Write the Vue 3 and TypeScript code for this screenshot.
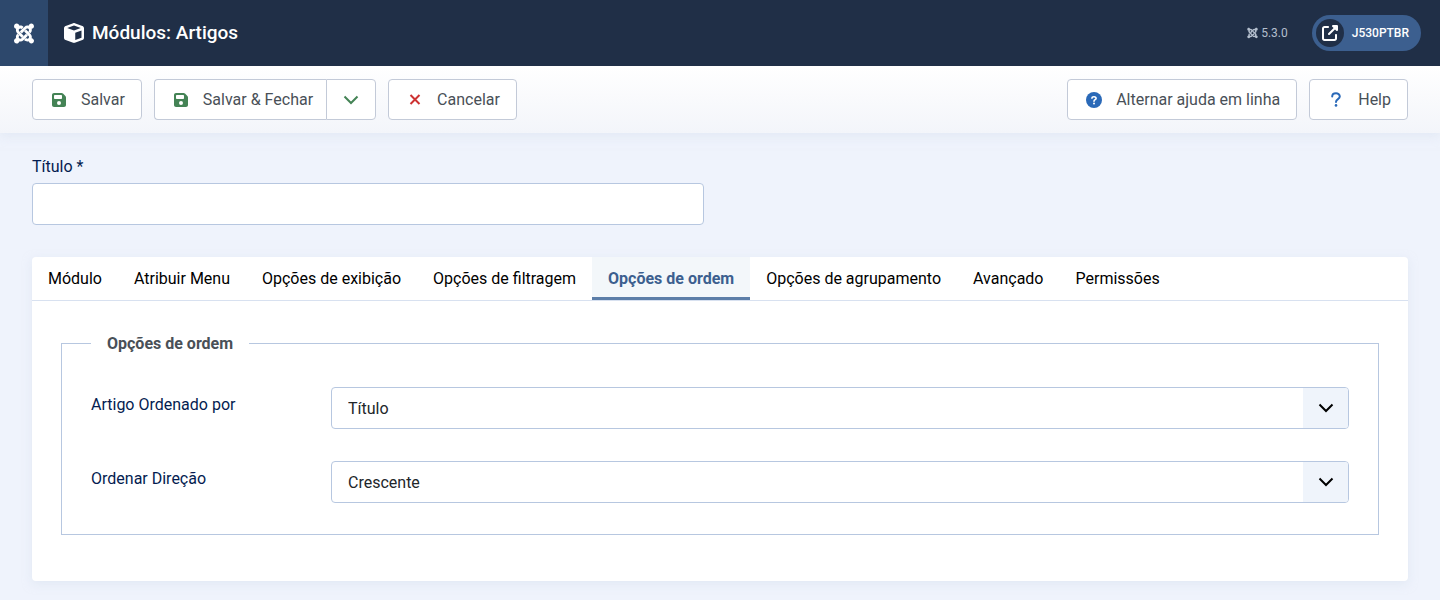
<script setup lang="ts">
import { ref } from 'vue'

interface SelectField {
  id: string
  label: string
  value: string
  options: string[]
}

const joomlaPath =
  'M.6 92.1C.6 58.8 27.4 32 60.4 32c30 0 54.5 21.9 59.2 50.2 32.6-7.6 67.1.6 96.5 30l-44.3 44.3c-20.5-20.5-42.6-16.3-55.4-3.5-14.3 14.3-14.3 37.9 0 52.2l99.5 99.5-44 44.3c-87.7-87.2-49.7-49.7-99.8-99.7-26.8-26.5-35-64.8-24.8-98.9C20.4 144.6.6 120.7.6 92.1zm129.5 116.4l44.3 44.3c10-10 89.7-89.7 99.7-99.8 14.3-14.3 37.6-14.3 51.9 0 12.8 12.8 17 35-3.5 55.4l44 44.3c31.2-31.2 38.5-67.6 28.9-101.2 29.2-4.1 51.9-29.2 51.9-59.5 0-33.2-26.8-60.1-59.8-60.1-30.3 0-55.4 22.5-59.5 51.6-33.8-9.9-71.7-1.5-98.3 25.1-18.3 19.1-71.1 71.5-99.6 99.9zm266.3 152.2c8.2-32.7-.9-68.5-26.3-93.9-11.8-12.2 5 4.7-99.5-99.7l-44.3 44.3 99.7 99.7c14.3 14.3 14.3 37.6 0 51.9-12.8 12.8-35 17-55.4-3.5l-44 44.3c27.6 30.2 68 38.8 102.7 28 5.5 27.4 29.7 48.1 58.9 48.1 33 0 59.8-26.8 59.8-60.1 0-30.2-22.5-55-51.6-59.1zm-84.3-53.1l-44-44.3c-87 86.4-50.4 50.4-99.7 99.8-14.3 14.3-37.6 14.3-51.9 0-13.1-13.4-16.9-35.3 3.2-55.4l-44-44.3c-30.2 30.2-38 65.2-29.5 98.3-26.7 6-46.2 29.9-46.2 58.2C0 453.2 26.8 480 59.8 480c28.6 0 52.5-19.8 58.6-46.7 32.7 8.2 68.5-.6 94.2-26 32.1-32.2 12.2-12.2 99.5-99.7z'
const cubePath =
  'M234.5 5.7c13.9-5 29.1-5 43.1 0l192 68.6C495 83.4 512 107.5 512 134.6V377.4c0 27-17 51.2-42.5 60.3l-192 68.6c-13.9 5-29.1 5-43.1 0l-192-68.6C17 428.6 0 404.5 0 377.4V134.6c0-27 17-51.2 42.5-60.3l192-68.6zM256 66L82.3 128 256 190l173.7-62L256 66zm32 368.6l160-57.1v-188L288 246.6v188z'
const savePath =
  'M64 32C28.7 32 0 60.7 0 96V416c0 35.3 28.7 64 64 64H384c35.3 0 64-28.7 64-64V173.3c0-17-6.7-33.3-18.7-45.3L352 50.7C340 38.7 323.7 32 306.7 32H64zm0 96c0-17.7 14.3-32 32-32H288c17.7 0 32 14.3 32 32v64c0 17.7-14.3 32-32 32H96c-17.7 0-32-14.3-32-32V128zM224 288a64 64 0 1 1 0 128 64 64 0 1 1 0-128z'
const externalPath =
  'M352 0c-12.9 0-24.6 7.8-29.6 19.8s-2.2 25.7 6.9 34.9L370.7 96 201.4 265.4c-12.5 12.5-12.5 32.8 0 45.3s32.8 12.5 45.3 0L416 141.3l41.4 41.4c9.2 9.2 22.9 11.9 34.9 6.9s19.8-16.6 19.8-29.6V32c0-17.7-14.3-32-32-32H352zM80 32C35.8 32 0 67.8 0 112V432c0 44.2 35.8 80 80 80H400c44.2 0 80-35.8 80-80V320c0-17.7-14.3-32-32-32s-32 14.3-32 32V432c0 8.8-7.2 16-16 16H80c-8.8 0-16-7.2-16-16V112c0-8.8 7.2-16 16-16H192c17.7 0 32-14.3 32-32s-14.3-32-32-32H80z'

const title = ref('')
const tabs: string[] = [
  'Módulo',
  'Atribuir Menu',
  'Opções de exibição',
  'Opções de filtragem',
  'Opções de ordem',
  'Opções de agrupamento',
  'Avançado',
  'Permissões',
]
const activeTab = ref('Opções de ordem')
const fields = ref<SelectField[]>([
  { id: 'ordering', label: 'Artigo Ordenado por', value: 'Título', options: ['Título', 'Data', 'Autor'] },
  { id: 'direction', label: 'Ordenar Direção', value: 'Crescente', options: ['Crescente', 'Decrescente'] },
])
</script>

<template>
  <div class="page">
    <header class="header">
      <a class="logo" href="#" aria-label="Joomla">
        <svg width="20" height="23" viewBox="0 0 448 512" fill="currentColor"><path :d="joomlaPath" /></svg>
      </a>
      <h1 class="title">
        <svg width="20" height="20" viewBox="0 0 512 512" fill="currentColor"><path :d="cubePath" /></svg>
        <span>Módulos: Artigos</span>
      </h1>
      <div class="version">
        <svg width="11" height="12" viewBox="0 0 448 512" fill="currentColor"><path :d="joomlaPath" /></svg>
        <span>5.3.0</span>
      </div>
      <a class="site" href="#">
        <span class="site-icon">
          <svg width="16" height="16" viewBox="0 0 512 512" fill="currentColor"><path :d="externalPath" /></svg>
        </span>
        <span>J530PTBR</span>
      </a>
    </header>

    <div class="toolbar">
      <button class="btn" type="button">
        <span class="icon green"><svg width="14" height="16" viewBox="0 0 448 512" fill="currentColor"><path :d="savePath" /></svg></span>
        Salvar
      </button>
      <div class="group">
        <button class="btn" type="button">
          <span class="icon green"><svg width="14" height="16" viewBox="0 0 448 512" fill="currentColor"><path :d="savePath" /></svg></span>
          Salvar &amp; Fechar
        </button>
        <button class="btn toggle green" type="button" aria-label="Mais opções">
          <svg width="16" height="10" viewBox="0 0 16 10" fill="none" stroke="currentColor" stroke-width="2"><path d="M1.5 1.5L8 8l6.5-6.5" /></svg>
        </button>
      </div>
      <button class="btn" type="button">
        <span class="icon red"><svg width="12" height="12" viewBox="0 0 12 12" fill="none" stroke="currentColor" stroke-width="2"><path d="M1.5 1l9 9M10.5 1l-9 9" /></svg></span>
        Cancelar
      </button>
      <button class="btn end" type="button">
        <span class="icon blue">
          <svg width="16" height="16" viewBox="0 0 16 16" fill="none">
            <circle cx="8" cy="8" r="8" fill="currentColor" />
            <path d="M5.9 6.1C6 4.2 10.1 4.3 10.1 6.4 10.1 7.7 8 7.7 8 9.2" stroke="#fff" stroke-width="1.6" stroke-linecap="round" />
            <circle cx="8" cy="11.5" r="1" fill="#fff" />
          </svg>
        </span>
        Alternar ajuda em linha
      </button>
      <button class="btn" type="button">
        <span class="icon blue">
          <svg width="10" height="16" viewBox="0 0 10 16" fill="none">
            <path d="M1.2 4.6C1.2.3 8.8.3 8.8 4.5 8.8 7.2 5 7 5 10" stroke="currentColor" stroke-width="2" stroke-linecap="round" />
            <circle cx="5" cy="13.4" r="1.3" fill="currentColor" />
          </svg>
        </span>
        Help
      </button>
    </div>

    <main class="content">
      <div class="title-field">
        <label for="title">Título *</label>
        <input id="title" v-model="title" type="text" required />
      </div>

      <section class="card">
        <div class="tabs" role="tablist">
          <button
            v-for="tab in tabs"
            :key="tab"
            type="button"
            role="tab"
            class="tab"
            :class="{ active: tab === activeTab }"
            :aria-selected="tab === activeTab"
            @click="activeTab = tab"
          >{{ tab }}</button>
        </div>
        <div class="panel">
          <fieldset>
            <legend>Opções de ordem</legend>
            <div v-for="field in fields" :key="field.id" class="row">
              <label :for="field.id">{{ field.label }}</label>
              <div class="select">
                <select :id="field.id" v-model="field.value">
                  <option v-for="option in field.options" :key="option">{{ option }}</option>
                </select>
                <span class="caret">
                  <svg width="16" height="10" viewBox="0 0 16 10" fill="none" stroke="currentColor" stroke-width="2"><path d="M1.5 1.5L8 8l6.5-6.5" /></svg>
                </span>
              </div>
            </div>
          </fieldset>
        </div>
      </section>
    </main>
  </div>
</template>

<style>
body {
  background: #eff3fc;
}
</style>

<style scoped>
.page {
  font: 16px/24px Roboto, "Liberation Sans", sans-serif;
  color: #22262a;
}
.page *,
.page *::before {
  box-sizing: border-box;
}
svg {
  display: block;
  flex: none;
}
button,
input,
select {
  font: inherit;
}
.header {
  position: relative;
  z-index: 1;
  display: flex;
  align-items: center;
  min-height: 66px;
  padding-right: 19px;
  background: #202f47;
  color: #fff;
}
.logo {
  display: flex;
  align-items: center;
  justify-content: center;
  align-self: stretch;
  width: 48px;
  background: #2d486c;
  color: #fff;
}
.title {
  display: flex;
  align-items: center;
  gap: 8px;
  flex: 1;
  margin: 0 0 0 16px;
  font-size: 19px;
  font-weight: 500;
}
.version {
  display: flex;
  align-items: center;
  gap: 3px;
  margin-right: 24px;
  font-size: 12px;
  color: #b4bfce;
}
.site {
  display: flex;
  align-items: center;
  gap: 8px;
  height: 36px;
  padding: 0 12px 0 4px;
  border-radius: 18px;
  background: #3c5f8f;
  color: #fff;
  font-size: 12px;
  font-weight: 500;
  text-decoration: none;
}
.site-icon {
  display: flex;
  align-items: center;
  justify-content: center;
  width: 28px;
  height: 28px;
  border-radius: 50%;
  background: #202f47;
}
.toolbar {
  display: flex;
  gap: 12px;
  padding: 13px 32px;
  background: linear-gradient(#fff, #f3f5fa);
  box-shadow: 0 3px 10px #d5dfee80;
}
.btn {
  display: flex;
  align-items: center;
  gap: 12px;
  height: 41px;
  padding: 0 16px;
  border: 1px solid #c3cad8;
  border-radius: 4px;
  background: #fff;
  color: #495057;
}
.icon {
  display: flex;
  justify-content: center;
  width: 20px;
}
.green,
.btn.green {
  color: #448355;
}
.red {
  color: #cd3232;
}
.blue {
  color: #2a69b8;
}
.group {
  display: flex;
}
.group .btn:first-child {
  padding-right: 13px;
  border-right: 0;
  border-radius: 4px 0 0 4px;
}
.btn.toggle {
  justify-content: center;
  width: 50px;
  padding: 0;
  border-radius: 0 4px 4px 0;
}
.end {
  margin-left: auto;
}
.content {
  padding: 22px 32px 20px;
}
.title-field {
  width: calc(50% - 16px);
  margin-bottom: 32px;
}
label {
  color: #041c50;
}
.title-field label {
  display: block;
  margin-bottom: 4px;
}
.title-field input {
  display: block;
  width: 100%;
  height: 42px;
  padding: 0 16px;
  border: 1px solid #b7c7e0;
  border-radius: 4px;
  background: #fff;
}
.card {
  border-radius: 4px;
  background: #fff;
  box-shadow: 0 3px 10px #d5dfee80;
}
.tabs {
  display: flex;
  border-bottom: 1px solid #d8e1f0;
  border-radius: 4px 4px 0 0;
  overflow: hidden;
}
.tab {
  height: 43px;
  padding: 0 16px;
  border: 0;
  background: none;
  color: #000;
}
.tab.active {
  background: #f3f7fa;
  box-shadow: inset 0 -3px #5c7ea8;
  color: #3c5f8f;
  font-weight: 700;
}
.panel {
  padding: 30px 29px 46px;
}
fieldset {
  min-width: 0;
  margin: 0;
  padding: 31px 29px;
  border: 1px solid #b7c7e0;
}
legend {
  padding: 1px 16px 0;
  color: #495057;
  font-weight: 700;
}
.row {
  display: grid;
  grid-template-columns: 240px 1fr;
}
.row + .row {
  margin-top: 32px;
}
.row label {
  padding-top: 6px;
}
.select {
  display: grid;
}
.select select {
  grid-area: 1 / 1;
  width: 100%;
  height: 42px;
  padding: 2px 60px 0 16px;
  border: 1px solid #b7c7e0;
  border-radius: 4px;
  background: #fff;
  color: #22262a;
  appearance: none;
}
.caret {
  grid-area: 1 / 1;
  display: flex;
  align-items: center;
  justify-content: center;
  justify-self: end;
  width: 45px;
  margin: 1px 1px 1px 0;
  border-radius: 0 3px 3px 0;
  background: #eff4fb;
  color: #000;
  pointer-events: none;
}
</style>
